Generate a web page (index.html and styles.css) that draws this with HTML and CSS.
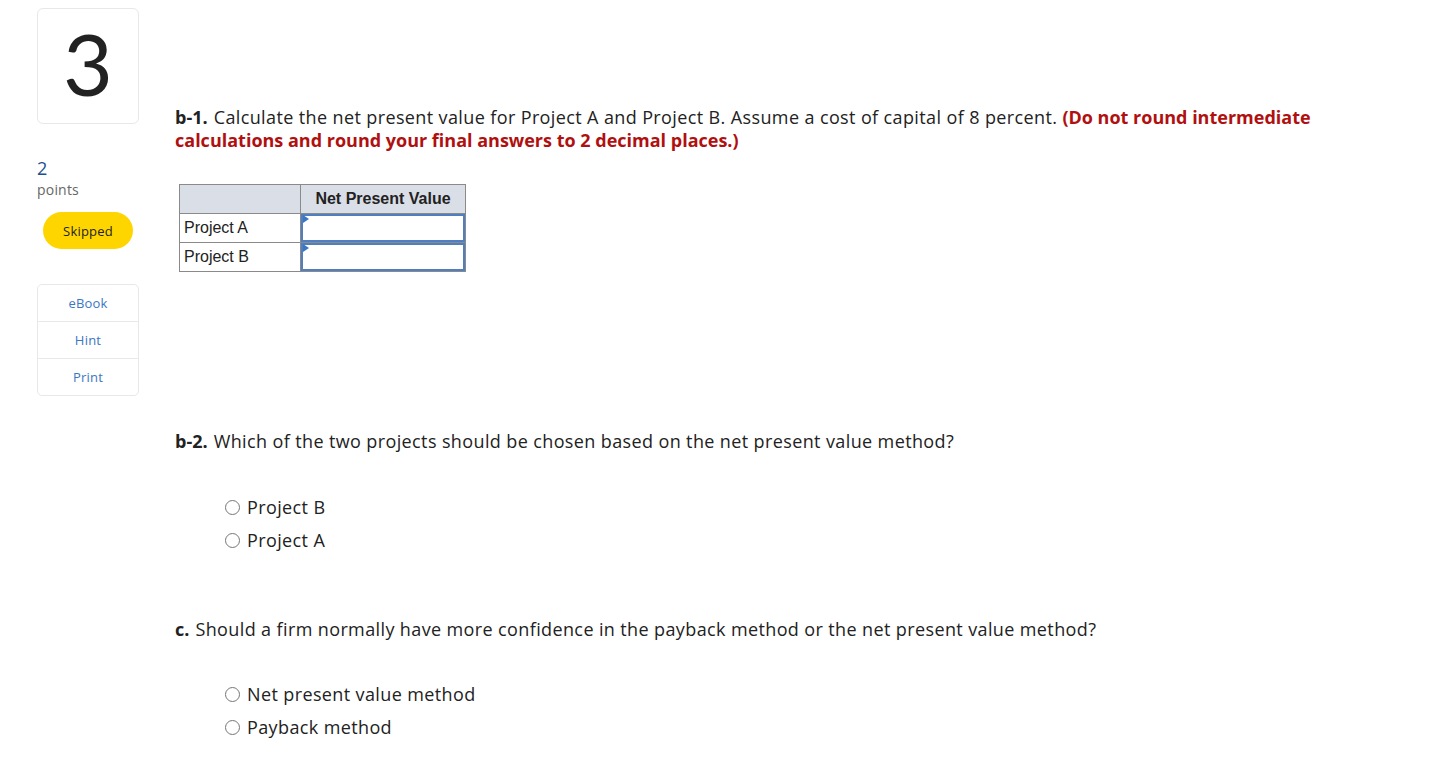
FILE: index.html
```html
<!DOCTYPE html>
<html>
<head>
<meta charset="utf-8">
<link rel="stylesheet" href="styles.css">
</head>
<body>
<div class="page">
  <aside class="sidebar">
    <div class="qnum">3</div>
    <div class="pts-num">2</div>
    <div class="pts-label">points</div>
    <div class="pill">Skipped</div>
    <ul class="tools">
      <li>eBook</li>
      <li>Hint</li>
      <li>Print</li>
    </ul>
  </aside>
  <main class="content">
    <p class="q q1"><b>b-1.</b> Calculate the net present value for Project A and Project B. Assume a cost of capital of 8 percent. <span class="red">(Do not round intermediate calculations and round your final answers to 2 decimal places.)</span></p>
    <table class="npv">
      <tr><th class="blank"></th><th>Net Present Value</th></tr>
      <tr><td class="lbl">Project A</td><td class="inp"><div class="box"><span class="tri"></span></div></td></tr>
      <tr><td class="lbl">Project B</td><td class="inp"><div class="box"><span class="tri"></span></div></td></tr>
    </table>
    <p class="q q2"><b>b-2.</b> Which of the two projects should be chosen based on the net present value method?</p>
    <div class="opts">
      <label class="opt"><span class="radio"></span>Project B</label>
      <label class="opt"><span class="radio"></span>Project A</label>
    </div>
    <p class="q q3"><b>c.</b> Should a firm normally have more confidence in the payback method or the net present value method?</p>
    <div class="opts opts-c">
      <label class="opt"><span class="radio"></span>Net present value method</label>
      <label class="opt"><span class="radio"></span>Payback method</label>
    </div>
  </main>
</div>
</body>
</html>
```
FILE: styles.css
```css
html, body { margin: 0; padding: 0; background: #fff; }
body { font-family: "Open Sans", "Lato", sans-serif; color: #222; }
.page { display: flex; align-items: flex-start; }
.sidebar { width: 102px; margin-left: 37px; padding-top: 8px; display: flex; flex-direction: column; }
.qnum {
  width: 102px; height: 116px; border: 1px solid #e8e8e8; border-radius: 6px;
  display: flex; align-items: center; justify-content: center;
  font-family: "Lato", sans-serif;
  font-size: 86px; font-weight: 400; color: #222; line-height: 1;
  padding-bottom: 6px; box-sizing: border-box;
}
.pts-num { margin-top: 34px; font-size: 18px; color: #1c4f91; line-height: 20px; }
.pts-label { font-size: 14px; color: #666; line-height: 18px; margin-top: 3px; letter-spacing: 0.2px; }
.pill {
  margin-top: 13px; margin-left: 6px; width: 90px; height: 37px; border-radius: 19px;
  background: #ffd500; color: #222; font-size: 13px; letter-spacing: 0.2px;
  display: flex; align-items: center; justify-content: center;
}
.tools { list-style: none; margin: 35px 0 0; padding: 0; border: 1px solid #e8e8e8; border-radius: 5px; }
.tools li { height: 36px; display: flex; align-items: center; justify-content: center; font-size: 13px; color: #3a77c2; border-top: 1px solid #e8e8e8; letter-spacing: 0.2px; }
.tools li:first-child { border-top: none; }
.content { margin-left: 36px; padding-top: 106px; }
.q { margin: 0; font-size: 18px; line-height: 23px; color: #222; letter-spacing: 0.38px; }
.q b { font-weight: 700; color: #222; letter-spacing: 0; margin-right: 1px; }
.red { color: #b0100f; font-weight: 700; letter-spacing: 0; }
.q1 { max-width: 1150px; }
.npv { border-collapse: collapse; margin: 32px 0 0 4px; font-family: "Liberation Sans", Arial, sans-serif; font-size: 16px; }
.npv th, .npv td { border: 1px solid #8a8a8a; padding: 0; height: 28px; }
.npv th { background: #d9dee7; font-weight: 700; color: #222; text-align: center; }
.npv th.blank { width: 120px; }
.npv th:last-child { width: 164px; }
.npv td.lbl { padding-left: 4px; color: #222; }
.npv td.inp { padding: 0; vertical-align: middle; }
.box { position: relative; height: 24px; border: 2px solid #4f7fc0; margin: 0; }
.tri { position: absolute; left: 0; top: -1px; width: 0; height: 0; border-top: 4px solid transparent; border-bottom: 4px solid transparent; border-left: 6px solid #3a77c2; }
.q2 { margin-top: 158px; }
.opts { display: flex; flex-direction: column; gap: 10px; margin-top: 43px; padding-left: 50px; }
.opts-c { margin-top: 42px; }
.opt { display: flex; align-items: center; font-size: 18px; line-height: 23px; color: #222; letter-spacing: 0.38px; }
.radio { width: 15px; height: 15px; border: 1px solid #767676; border-radius: 50%; margin-right: 7px; box-sizing: border-box; flex: none; }
.q3 { margin-top: 66px; }
```
